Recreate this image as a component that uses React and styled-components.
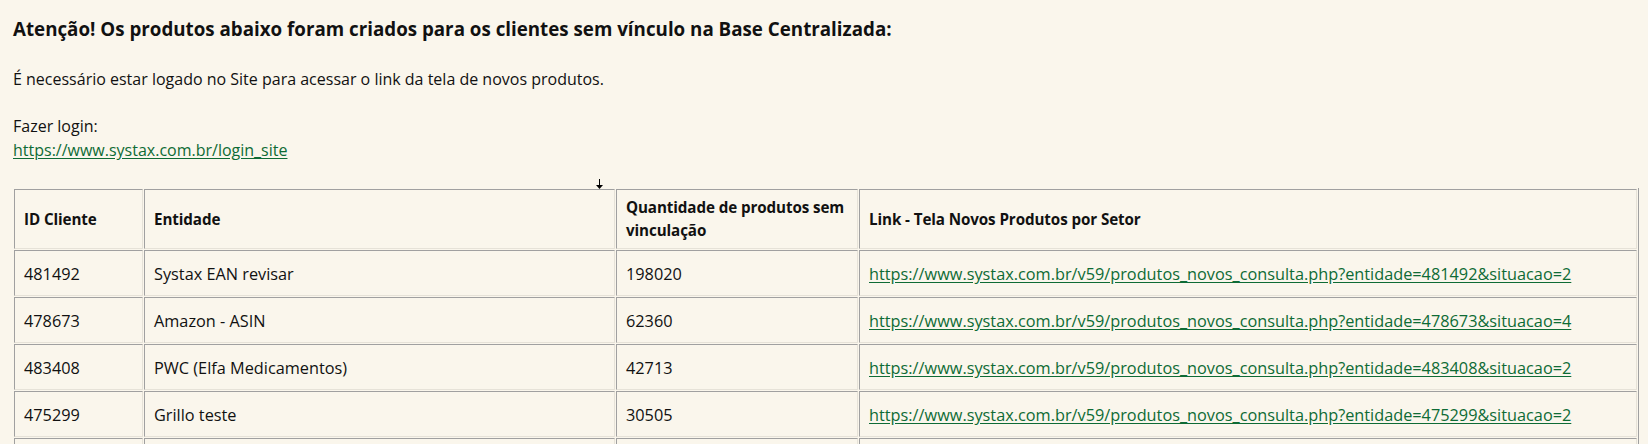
import React from "react";
import styled, { createGlobalStyle } from "styled-components";

const FONT = `"Open Sans", Lato, "Liberation Sans", sans-serif`;

const GlobalStyle = createGlobalStyle`
  html, body {
    margin: 0;
    padding: 0;
    background: #faf6ec;
  }
  body {
    font-family: ${FONT};
    color: #111;
  }
`;

const Page = styled.div`
  padding: 15px 8px 0 13px;
  background: #faf6ec;
  height: 444px;
  box-sizing: border-box;
  overflow: hidden;
`;

const Title = styled.h2`
  margin: 0;
  font-size: 18.75px;
  line-height: 28px;
  font-weight: 700;
`;

const Para = styled.p`
  margin: ${(props) => props.$gap || 0}px 0 0;
  font-size: 16px;
  line-height: 24px;
`;

const Link = styled.a`
  color: #0e6b35;
  text-decoration: underline;
  text-underline-offset: 2px;
`;

const TableWrap = styled.div`
  position: relative;
  margin-top: 26px;
`;

const Cursor = styled.svg`
  position: absolute;
  left: 583px;
  top: -9px;
`;

const Table = styled.table`
  width: 1626px;
  border-collapse: separate;
  border-spacing: 1px;
  border-right: 1px solid #a0a0a0;
  border-bottom: 1px solid #a0a0a0;
  table-layout: fixed;
`;

const Th = styled.th`
  text-align: left;
  font-weight: 700;
  font-size: 15.2px;
  letter-spacing: -0.1px;
  line-height: 23px;
  padding: 6px 3px 6px 9px;
  height: 46px;
  border-top: 1px solid #a0a0a0;
  border-left: 1px solid #a0a0a0;
  border-bottom: 1px solid #e6e2d8;
  border-right: 1px solid #e6e2d8;
  vertical-align: middle;
`;

const Td = styled.td`
  font-size: 16.3px;
  line-height: 23px;
  padding: 12px 9px 9px;
  border-top: 1px solid #a0a0a0;
  border-left: 1px solid #a0a0a0;
  border-bottom: 1px solid #e6e2d8;
  border-right: 1px solid #e6e2d8;
  white-space: nowrap;
  height: 23px;
`;

const rows = [
  { id: "481492", name: "Systax EAN revisar", qty: "198020", sit: 2 },
  { id: "478673", name: "Amazon - ASIN", qty: "62360", sit: 4 },
  { id: "483408", name: "PWC (Elfa Medicamentos)", qty: "42713", sit: 2 },
  { id: "475299", name: "Grillo teste", qty: "30505", sit: 2 },
];

const linkFor = (r) =>
  `https://www.systax.com.br/v59/produtos_novos_consulta.php?entidade=${r.id}&situacao=${r.sit}`;

export default function App() {
  return (
    <>
      <GlobalStyle />
      <Page>
        <Title>
          Atenção! Os produtos abaixo foram criados para os clientes sem vínculo na Base Centralizada:
        </Title>
        <Para $gap={24}>
          É necessário estar logado no Site para acessar o link da tela de novos produtos.
        </Para>
        <Para $gap={23}>
          Fazer login:
          <br />
          <Link href="#">https://www.systax.com.br/login_site</Link>
        </Para>
        <TableWrap>
          <Cursor width="7" height="10" viewBox="0 0 7 10">
            <path d="M3 0h1v6h3L3.5 10 0 6h3z" fill="#000" />
          </Cursor>
          <Table>
            <colgroup>
              <col style={{ width: 129 }} />
              <col style={{ width: 471 }} />
              <col style={{ width: 242 }} />
              <col />
            </colgroup>
            <thead>
              <tr>
                <Th>ID Cliente</Th>
                <Th>Entidade</Th>
                <Th>Quantidade de produtos sem vinculação</Th>
                <Th>Link - Tela Novos Produtos por Setor</Th>
              </tr>
            </thead>
            <tbody>
              {rows.map((r) => (
                <tr key={r.id}>
                  <Td>{r.id}</Td>
                  <Td>{r.name}</Td>
                  <Td>{r.qty}</Td>
                  <Td>
                    <Link href="#">{linkFor(r)}</Link>
                  </Td>
                </tr>
              ))}
              <tr>
                <Td>&nbsp;</Td>
                <Td>&nbsp;</Td>
                <Td>&nbsp;</Td>
                <Td>&nbsp;</Td>
              </tr>
            </tbody>
          </Table>
        </TableWrap>
      </Page>
    </>
  );
}
